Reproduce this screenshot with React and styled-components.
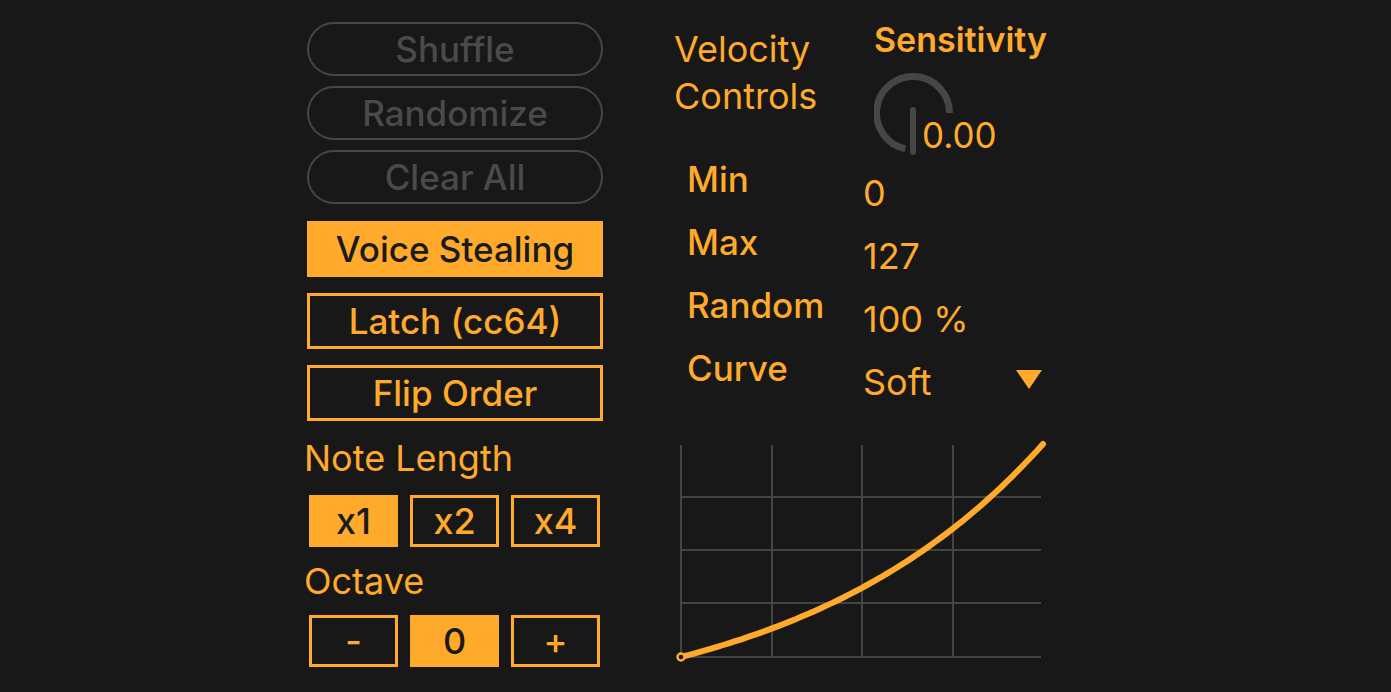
import React from "react";
import styled, { createGlobalStyle } from "styled-components";

const ORANGE = "#ffaa2b";
const BG = "#181818";
const GREY = "#464646";

const Global = createGlobalStyle`
  html, body {
    margin: 0;
    padding: 0;
    background: ${BG};
    font-family: Inter, "Liberation Sans", sans-serif;
  }
`;

let Page = styled.div`
  width: 1391px;
  height: 692px;
  display: flex;
  padding: 22px 0 0 307px;
  box-sizing: border-box;
  gap: 71px;
  overflow: hidden;
`;

let LeftColumn = styled.div`
  width: 296px;
  display: flex;
  flex-direction: column;
`;

let Pill = styled.div`
  height: 54px;
  box-sizing: border-box;
  border: 2.5px solid ${GREY};
  border-radius: 27px;
  color: #4a4a4a;
  font-size: 35px;
  font-weight: 500;
  display: flex;
  align-items: center;
  justify-content: center;
  margin-bottom: 10px;
`;

let Toggle = styled.div`
  height: 56px;
  box-sizing: border-box;
  border: 3px solid ${ORANGE};
  background: ${(p) => (p.on ? ORANGE : "transparent")};
  color: ${(p) => (p.on ? "#1a1a1a" : ORANGE)};
  font-size: 35px;
  font-weight: 500;
  display: flex;
  align-items: center;
  justify-content: center;
  margin-top: ${(p) => p.top || 16}px;
`;

let SectionLabel = styled.div`
  color: ${ORANGE};
  font-size: 36px;
  font-weight: 400;
  height: ${(p) => p.h}px;
  line-height: ${(p) => p.h}px;
  margin-left: -3px;
`;

let ButtonRow = styled.div`
  display: grid;
  grid-template-columns: repeat(3, 89px);
  gap: 12px;
  padding-left: 2px;
`;

let Cell = styled.div`
  height: 52px;
  box-sizing: border-box;
  border: 3px solid ${ORANGE};
  background: ${(p) => (p.on ? ORANGE : "transparent")};
  color: ${(p) => (p.on ? "#1a1a1a" : ORANGE)};
  font-size: 36px;
  font-weight: 500;
  display: flex;
  align-items: center;
  justify-content: center;
`;

let RightColumn = styled.div`
  width: 380px;
  display: flex;
  flex-direction: column;
`;

let Header = styled.div`
  display: flex;
  height: 138px;
  margin-top: -2px;
`;

let Title = styled.div`
  width: 200px;
  color: ${ORANGE};
  font-size: 36px;
  font-weight: 400;
  line-height: 47px;
  padding-top: 6px;
`;

let Sensitivity = styled.div`
  display: flex;
  flex-direction: column;
`;

let SensTitle = styled.div`
  color: ${ORANGE};
  font-size: 34px;
  font-weight: 600;
  line-height: 40px;
`;

let KnobWrap = styled.div`
  position: relative;
  width: 130px;
  height: 98px;
`;

let KnobValue = styled.span`
  position: absolute;
  left: 46px;
  top: 55px;
  padding-left: 2px;
  background: ${BG};
  color: ${ORANGE};
  font-size: 35px;
  font-weight: 400;
  line-height: 40px;
`;

let Params = styled.div`
  display: grid;
  grid-template-columns: 176px 1fr;
  grid-auto-rows: 63px;
  padding-left: 13px;
  margin-top: 1px;
  margin-bottom: 6px;
`;

let ParamLabel = styled.div`
  color: ${ORANGE};
  font-size: 35px;
  font-weight: 500;
  line-height: 40px;
`;

let ParamValue = styled.div`
  color: ${ORANGE};
  font-size: 36px;
  font-weight: 400;
  line-height: 40px;
  padding-top: 4px;
  display: flex;
  justify-content: space-between;
  align-items: center;
  padding-right: 12px;
`;

let Arrow = styled.span`
  width: 0;
  height: 0;
  border-left: 13px solid transparent;
  border-right: 13px solid transparent;
  border-top: 19px solid ${ORANGE};
  margin-top: -4px;
`;

let Chart = styled.svg`
  display: block;
  margin-top: 21px;
`;

function Knob() {
  return (
    <KnobWrap>
      <svg width="90" height="98" viewBox="0 0 90 98">
        <path
          d="M 31.4 88.7 A 36.5 36.5 0 1 1 75.5 53"
          fill="none"
          stroke={GREY}
          strokeWidth="7"
        />
        <line x1="39" y1="50" x2="39" y2="92" stroke={GREY} strokeWidth="6" strokeLinecap="round" />
      </svg>
      <KnobValue>0.00</KnobValue>
    </KnobWrap>
  );
}

function CurveChart() {
  const x0 = 7, y0 = 219, w = 360, h = 212;
  const k = 1.462;
  const pts = [];
  for (let i = 0; i <= 60; i++) {
    const t = i / 60;
    const v = (Math.exp(k * t) - 1) / (Math.exp(k) - 1);
    pts.push(`${(x0 + t * (w + 2)).toFixed(1)},${(y0 - v * (h + 1)).toFixed(1)}`);
  }
  const vx = [0, 91, 181, 272];
  const hy = [52, 105, 158, 212];
  return (
    <Chart width="380" height="230" viewBox="0 0 380 230">
      {vx.map((x) => (
        <line key={"v" + x} x1={x0 + x} y1={7} x2={x0 + x} y2={y0} stroke="#444" strokeWidth="2" />
      ))}
      {hy.map((y) => (
        <line key={"h" + y} x1={x0} y1={7 + y} x2={x0 + w} y2={7 + y} stroke="#444" strokeWidth="2" />
      ))}
      <polyline points={pts.join(" ")} fill="none" stroke={ORANGE} strokeWidth="6" strokeLinecap="round" strokeLinejoin="round" />
      <circle cx={x0} cy={y0} r="3.5" fill={BG} stroke={ORANGE} strokeWidth="2.5" />
    </Chart>
  );
}

export default function App() {
  return (
    <>
      <Global />
      <Page>
        <LeftColumn>
          <Pill>Shuffle</Pill>
          <Pill>Randomize</Pill>
          <Pill>Clear All</Pill>
          <Toggle on top={7}>Voice Stealing</Toggle>
          <Toggle>Latch (cc64)</Toggle>
          <Toggle>Flip Order</Toggle>
          <SectionLabel h={74}>Note Length</SectionLabel>
          <ButtonRow>
            <Cell on>x1</Cell>
            <Cell>x2</Cell>
            <Cell>x4</Cell>
          </ButtonRow>
          <SectionLabel h={68}>Octave</SectionLabel>
          <ButtonRow>
            <Cell>-</Cell>
            <Cell on>0</Cell>
            <Cell>+</Cell>
          </ButtonRow>
        </LeftColumn>
        <RightColumn>
          <Header>
            <Title>
              Velocity
              <br />
              Controls
            </Title>
            <Sensitivity>
              <SensTitle>Sensitivity</SensTitle>
              <Knob />
            </Sensitivity>
          </Header>
          <Params>
            <ParamLabel>Min</ParamLabel>
            <ParamValue>0</ParamValue>
            <ParamLabel>Max</ParamLabel>
            <ParamValue>127</ParamValue>
            <ParamLabel>Random</ParamLabel>
            <ParamValue>100 %</ParamValue>
            <ParamLabel>Curve</ParamLabel>
            <ParamValue>
              Soft
              <Arrow />
            </ParamValue>
          </Params>
          <CurveChart />
        </RightColumn>
      </Page>
    </>
  );
}
